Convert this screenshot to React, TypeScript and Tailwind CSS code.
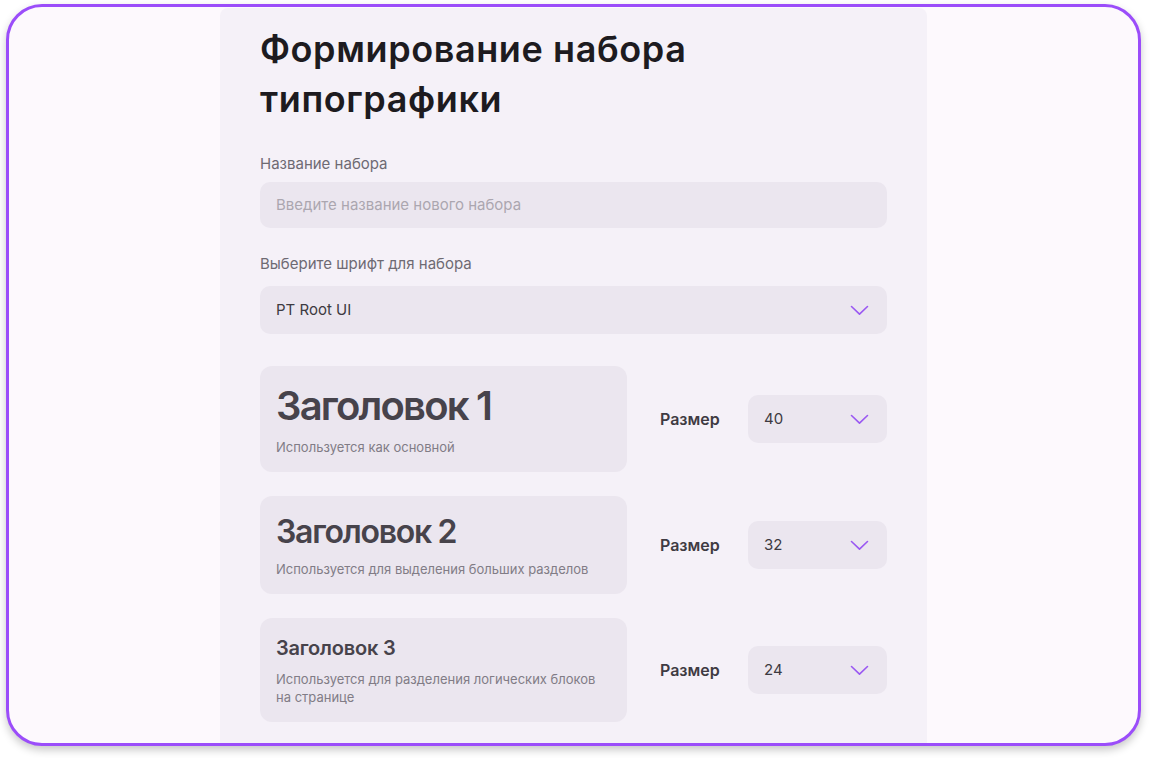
import React from "react";

const sizes = [
  {
    title: "Заголовок 1",
    hint: "Используется как основной",
    value: "40",
    titleClass: "text-[40px] leading-[48px] tracking-[-0.045em]",
  },
  {
    title: "Заголовок 2",
    hint: "Используется для выделения больших разделов",
    value: "32",
    titleClass: "text-[32px] leading-[40px] tracking-[-0.04em]",
  },
  {
    title: "Заголовок 3",
    hint: "Используется для разделения логических блоков на странице",
    value: "24",
    titleClass: "text-[20px] leading-[28px] tracking-[-0.01em]",
  },
];

function Chevron() {
  return (
    <svg width="19" height="11" viewBox="0 0 19 11" fill="none" className="shrink-0">
      <path d="M1.5 1.5 9.5 9.2 17.5 1.5" stroke="#9a58f2" strokeWidth="1.6" strokeLinecap="round" strokeLinejoin="round" />
    </svg>
  );
}

function SelectBox({ value, className }: { value: string; className?: string }) {
  return (
    <div
      className={
        "flex h-12 items-center justify-between rounded-[10px] bg-[#ebe6ef] pl-4 pr-[18px] text-[15px] text-[#3d3a41] " +
        (className ?? "")
      }
    >
      <span>{value}</span>
      <Chevron />
    </div>
  );
}

export default function App() {
  return (
    <div className="h-[758px] w-[1151px] bg-white pl-[6px] pt-[4px] font-['Inter','Noto_Sans',sans-serif]">
      <div className="flex h-[742px] w-[1135px] overflow-hidden rounded-[36px] border-[3px] border-[#9b4dfa] bg-[#fdf9fd] shadow-[0_4px_8px_rgba(0,0,0,0.22)]">
        <div className="ml-[211px] mt-[1px] w-[707px] shrink-0 rounded-t-[8px] bg-[#f5f1f8] px-10 pt-4">
          <h1 className="text-[36px] font-semibold leading-[50px] tracking-[0.6px] text-[#1d1b20]">
            Формирование набора
            <br />
            типографики
          </h1>

          <label className="mt-[30px] block text-[15px] leading-5 text-[#6e6a73]">Название набора</label>
          <div className="mt-[8px] flex h-[46px] items-center rounded-[10px] bg-[#ebe6ef] px-4 text-[15px] text-[#aba6af]">
            Введите название нового набора
          </div>

          <label className="mt-[26px] block text-[15px] leading-5 text-[#6e6a73]">Выберите шрифт для набора</label>
          <SelectBox value="PT Root UI" className="mt-[12px] text-[#2d2a30]" />

          <div className="mt-8 flex flex-col gap-6">
            {sizes.map((s) => (
              <div key={s.title} className="flex items-center">
                <div className="w-[367px] shrink-0 rounded-xl bg-[#ebe6ef] px-4 pb-4 pt-4">
                  <div className={"font-semibold text-[#47434b] " + s.titleClass}>{s.title}</div>
                  <div className="mt-2 text-[13px] leading-[18px] text-[#817c86]">{s.hint}</div>
                </div>
                <span className="ml-[33px] text-[16px] font-semibold text-[#3f3b43]">Размер</span>
                <SelectBox value={s.value} className="ml-auto w-[139px]" />
              </div>
            ))}
          </div>
        </div>
      </div>
    </div>
  );
}
